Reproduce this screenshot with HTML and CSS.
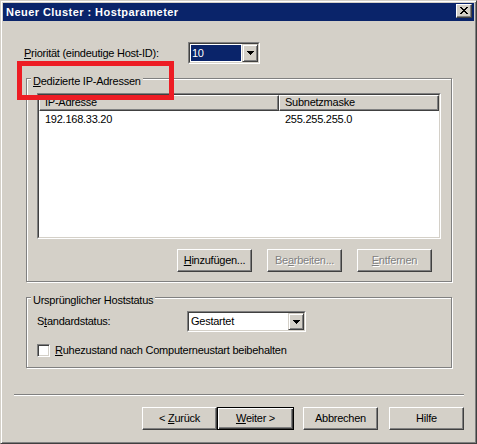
FILE: index.html
```html
<!DOCTYPE html>
<html>
<head>
<meta charset="utf-8">
<title>Neuer Cluster : Hostparameter</title>
<link rel="stylesheet" href="styles.css">
</head>
<body>
<div class="window">
  <div class="titlebar">
    <span class="title">Neuer Cluster : Hostparameter</span>
    <span class="close-btn"><svg width="8" height="7" viewBox="0 0 8 7" shape-rendering="crispEdges"><path d="M0 0h2v1H0z M6 0h2v1H6z M1 1h2v1H1z M5 1h2v1H5z M2 2h4v1H2z M3 3h2v1H3z M2 4h4v1H2z M1 5h2v1H1z M5 5h2v1H5z M0 6h2v1H0z M6 6h2v1H6z" fill="#000"/></svg></span>
  </div>
  <div class="content">
    <div class="prio-row">
      <span class="prio-label"><u>P</u>riorität (eindeutige Host-ID):</span>
      <div class="combo combo-prio">
        <div class="combo-in">
          <span class="combo-value selected">10</span>
          <span class="drop"><svg width="7" height="4" viewBox="0 0 7 4" shape-rendering="crispEdges"><path d="M0 0h7v1H0z M1 1h5v1H1z M2 2h3v1H2z M3 3h1v1H3z" fill="#000"/></svg></span>
        </div>
      </div>
    </div>

    <div class="group group-ip">
      <div class="legend"><u>D</u>edizierte IP-Adressen</div>
      <div class="listview">
        <div class="lv-in">
          <div class="lv-header">
            <div class="lv-hcell c1">IP-Adresse</div>
            <div class="lv-hcell c2">Subnetzmaske</div>
          </div>
          <div class="lv-row">
            <span class="c1">192.168.33.20</span>
            <span class="c2">255.255.255.0</span>
          </div>
        </div>
      </div>
      <div class="btn-row">
        <div class="btn"><span><u>H</u>inzufügen...</span></div>
        <div class="btn disabled"><span>Be<u>a</u>rbeiten...</span></div>
        <div class="btn disabled"><span><u>E</u>ntfernen</span></div>
      </div>
    </div>

    <div class="group group-status">
      <div class="legend">Ursprünglicher Hoststatus</div>
      <div class="status-row">
        <span class="status-label">S<u>t</u>andardstatus:</span>
        <div class="combo combo-status">
          <div class="combo-in">
            <span class="combo-value">Gestartet</span>
            <span class="drop"><svg width="7" height="4" viewBox="0 0 7 4" shape-rendering="crispEdges"><path d="M0 0h7v1H0z M1 1h5v1H1z M2 2h3v1H2z M3 3h1v1H3z" fill="#000"/></svg></span>
          </div>
        </div>
      </div>
      <div class="check-row">
        <span class="checkbox"></span>
        <span class="check-label"><u>R</u>uhezustand nach Computerneustart beibehalten</span>
      </div>
    </div>

    <div class="separator"></div>

    <div class="footer">
      <div class="btn"><span>&lt; <u>Z</u>urück</span></div>
      <div class="btn default"><span><u>W</u>eiter &gt;</span></div>
      <div class="btn btn-cancel"><span>Abbrechen</span></div>
      <div class="btn btn-help"><span>Hilfe</span></div>
    </div>
  </div>
  <div class="annotation"></div>
</div>
</body>
</html>
```

FILE: styles.css
```css
* { box-sizing: border-box; }
html, body { margin: 0; padding: 0; }
body {
  background: #d4d0c8;
  font-family: "Liberation Sans", Arial, sans-serif;
  font-size: 11px;
  line-height: 13px;
  letter-spacing: -0.25px;
  color: #000;
}
u { text-decoration: underline; text-underline-offset: 1px; }

.window {
  position: relative;
  width: 477px;
  height: 444px;
  background: #d4d0c8;
  border: 1px solid;
  border-color: #d4d0c8 #404040 #404040 #d4d0c8;
  padding: 2px;
  box-shadow: inset 1px 1px 0 #fff, inset -1px -1px 0 #808080;
}

.titlebar {
  height: 18px;
  background: #0a246a;
  display: flex;
  justify-content: space-between;
  padding: 0 2px 0 3px;
}
.title {
  color: #fff;
  font-weight: bold;
  font-size: 11px;
  letter-spacing: 0.45px;
  line-height: 18px;
}
.close-btn {
  width: 16px;
  height: 14px;
  margin-top: 1px;
  background: #d4d0c8;
  border: 1px solid;
  border-color: #fff #404040 #404040 #fff;
  box-shadow: inset -1px -1px 0 #808080;
  padding: 2px 0 0 3px;
}
.close-btn svg { display: block; }

.content { padding: 0 22px 0 23px; }

.prio-row {
  display: flex;
  align-items: center;
  margin: 21px 0 0 -2px;
}
.prio-label { width: 164px; }

.combo {
  display: flex;
  border: 1px solid;
  border-color: #808080 #fff #fff #808080;
}
.combo-prio { width: 72px; height: 22px; }
.combo-status { width: 119px; height: 21px; }
.combo-in {
  flex: 1;
  display: flex;
  border: 1px solid;
  border-color: #404040 #d4d0c8 #d4d0c8 #404040;
  background: #fff;
}
.combo-value {
  flex: 1;
  margin: 1px;
  padding-left: 1px;
  display: flex;
  align-items: center;
}
.combo-value.selected { background: #0a246a; color: #fff; }
.drop {
  width: 16px;
  display: flex;
  align-items: center;
  justify-content: center;
  background: #d4d0c8;
  border: 1px solid;
  border-color: #d4d0c8 #404040 #404040 #d4d0c8;
  box-shadow: inset 1px 1px 0 #fff, inset -1px -1px 0 #808080;
}
.drop svg { display: block; }

.group {
  border: 1px solid #808080;
  box-shadow: inset 1px 1px 0 #fff, 1px 1px 0 #fff;
  padding: 0 10px 9px 10px;
}
.group-ip { margin-top: 14px; }
.group-status { margin-top: 15px; padding-bottom: 10px; }
.legend {
  display: table;
  background: #d4d0c8;
  padding: 0 2px;
  margin: -4px 0 0 -6px;
  line-height: 13px;
}

.listview {
  margin-top: 5px;
  height: 146px;
  border: 1px solid;
  border-color: #808080 #fff #fff #808080;
}
.lv-in {
  height: 100%;
  border: 1px solid;
  border-color: #404040 #d4d0c8 #d4d0c8 #404040;
  background: #fff;
}
.lv-header { display: flex; height: 16px; }
.lv-hcell {
  border: 1px solid;
  border-color: #fff #404040 #404040 #fff;
  box-shadow: inset -1px -1px 0 #808080;
  background: #d4d0c8;
  padding-left: 5px;
  line-height: 13px;
}
.c1 { width: 240px; flex: none; }
.c2 { flex: 1; }
.lv-row { display: flex; line-height: 16px; }
.lv-row span { padding-left: 6px; }

.btn-row {
  display: flex;
  justify-content: flex-end;
  gap: 15px;
  margin: 10px 9px 0 0;
}
.btn {
  width: 75px;
  height: 23px;
  display: flex;
  align-items: center;
  justify-content: center;
  background: #d4d0c8;
  border: 1px solid;
  border-color: #fff #404040 #404040 #fff;
  box-shadow: inset -1px -1px 0 #808080;
}
.btn.disabled { color: #808080; text-shadow: 1px 1px 0 #fff; }
.btn.default {
  width: 77px;
  border: 1px solid #000;
  box-shadow: inset 1px 1px 0 #fff, inset -1px -1px 0 #404040, inset -2px -2px 0 #808080;
}

.status-row {
  display: flex;
  align-items: center;
  margin-top: 4px;
}
.status-label { width: 150px; }
.check-row {
  display: flex;
  align-items: center;
  height: 13px;
  margin-top: 12px;
}
.checkbox {
  width: 13px;
  height: 13px;
  flex: none;
  border: 1px solid;
  border-color: #808080 #fff #fff #808080;
  box-shadow: inset 1px 1px 0 #404040, inset -1px -1px 0 #d4d0c8;
  background: #fff;
}
.check-label { margin-left: 5px; }

.separator {
  height: 2px;
  border-top: 1px solid #808080;
  border-bottom: 1px solid #fff;
  margin: 26px -12px 0 -12px;
}
.footer {
  display: flex;
  justify-content: flex-end;
  margin: 11px -12px 0 0;
}
.btn-cancel { margin-left: 9px; }
.btn-help { margin-left: 11px; }

.annotation {
  position: absolute;
  left: 16px;
  top: 60px;
  width: 157px;
  height: 39px;
  border: 5px solid #ed1c24;
}
```
